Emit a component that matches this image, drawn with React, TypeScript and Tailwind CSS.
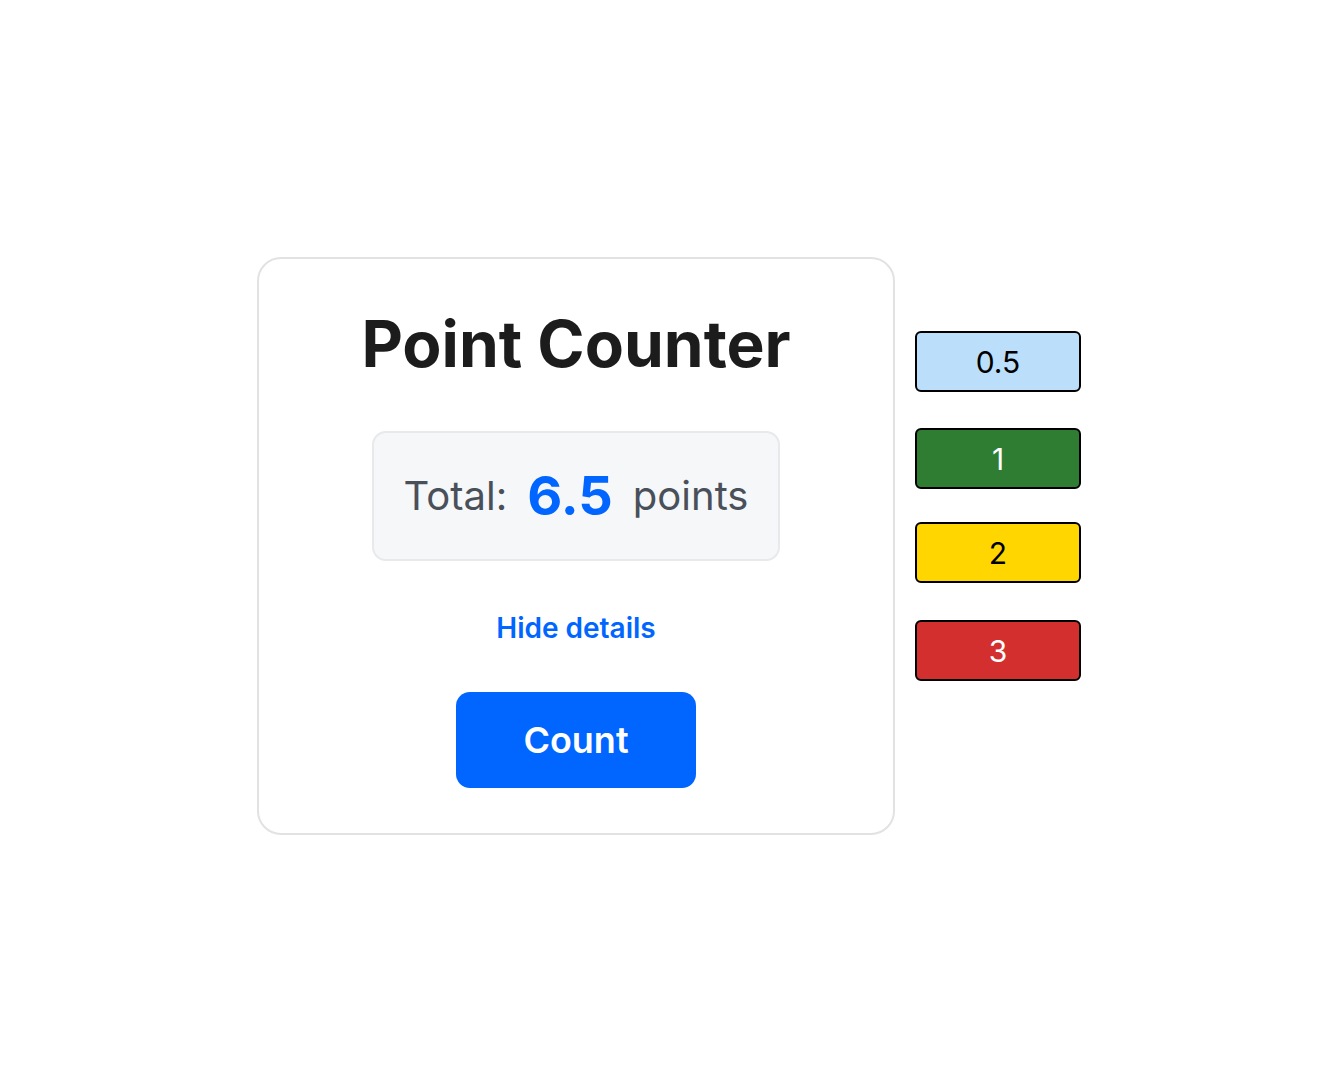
import React from 'react';

interface PointButtonProps {
  label: string;
  className: string;
}

const PointButton: React.FC<PointButtonProps> = ({ label, className }) => (
  <button
    className={`w-[166px] h-[61px] border-2 border-black rounded-[6px] text-[30px] leading-none flex items-center justify-center ${className}`}
  >
    {label}
  </button>
);

const App: React.FC = () => {
  return (
    <div
      className="min-h-screen bg-white flex items-center justify-center"
      style={{ fontFamily: 'Inter, "Noto Sans", sans-serif' }}
    >
      <div className="w-[638px] border-2 border-[#e2e2e2] rounded-[24px] pt-[53px] pb-[45px] flex flex-col items-center">
        <h1 className="text-[64px] leading-[64px] font-bold text-[#1c1c1c]">Point Counter</h1>

        <div className="mt-[55px] w-[408px] h-[130px] border-2 border-[#e8e9ec] rounded-[14px] bg-[#f6f7f9] flex items-center justify-center gap-[20px]">
          <span className="text-[40px] text-[#4a5059]">Total:</span>
          <span className="text-[54px] font-bold text-[#0066ff] leading-none">6.5</span>
          <span className="text-[40px] text-[#4a5059]">points</span>
        </div>

        <button className="mt-[50px] text-[28px] leading-[34px] font-semibold text-[#0066ff]">
          Hide details
        </button>

        <button className="mt-[47px] w-[240px] h-[96px] rounded-[14px] bg-[#0066ff] text-white text-[36px] font-semibold">
          Count
        </button>
      </div>

      <div className="self-start mt-[331px] ml-[20px] flex flex-col">
        <PointButton label="0.5" className="bg-[#bbdefb] text-black" />
        <PointButton label="1" className="mt-[36px] bg-[#2e7d32] text-white" />
        <PointButton label="2" className="mt-[33px] bg-[#ffd600] text-black" />
        <PointButton label="3" className="mt-[37px] bg-[#d32f2f] text-white" />
      </div>
    </div>
  );
};

export default App;
